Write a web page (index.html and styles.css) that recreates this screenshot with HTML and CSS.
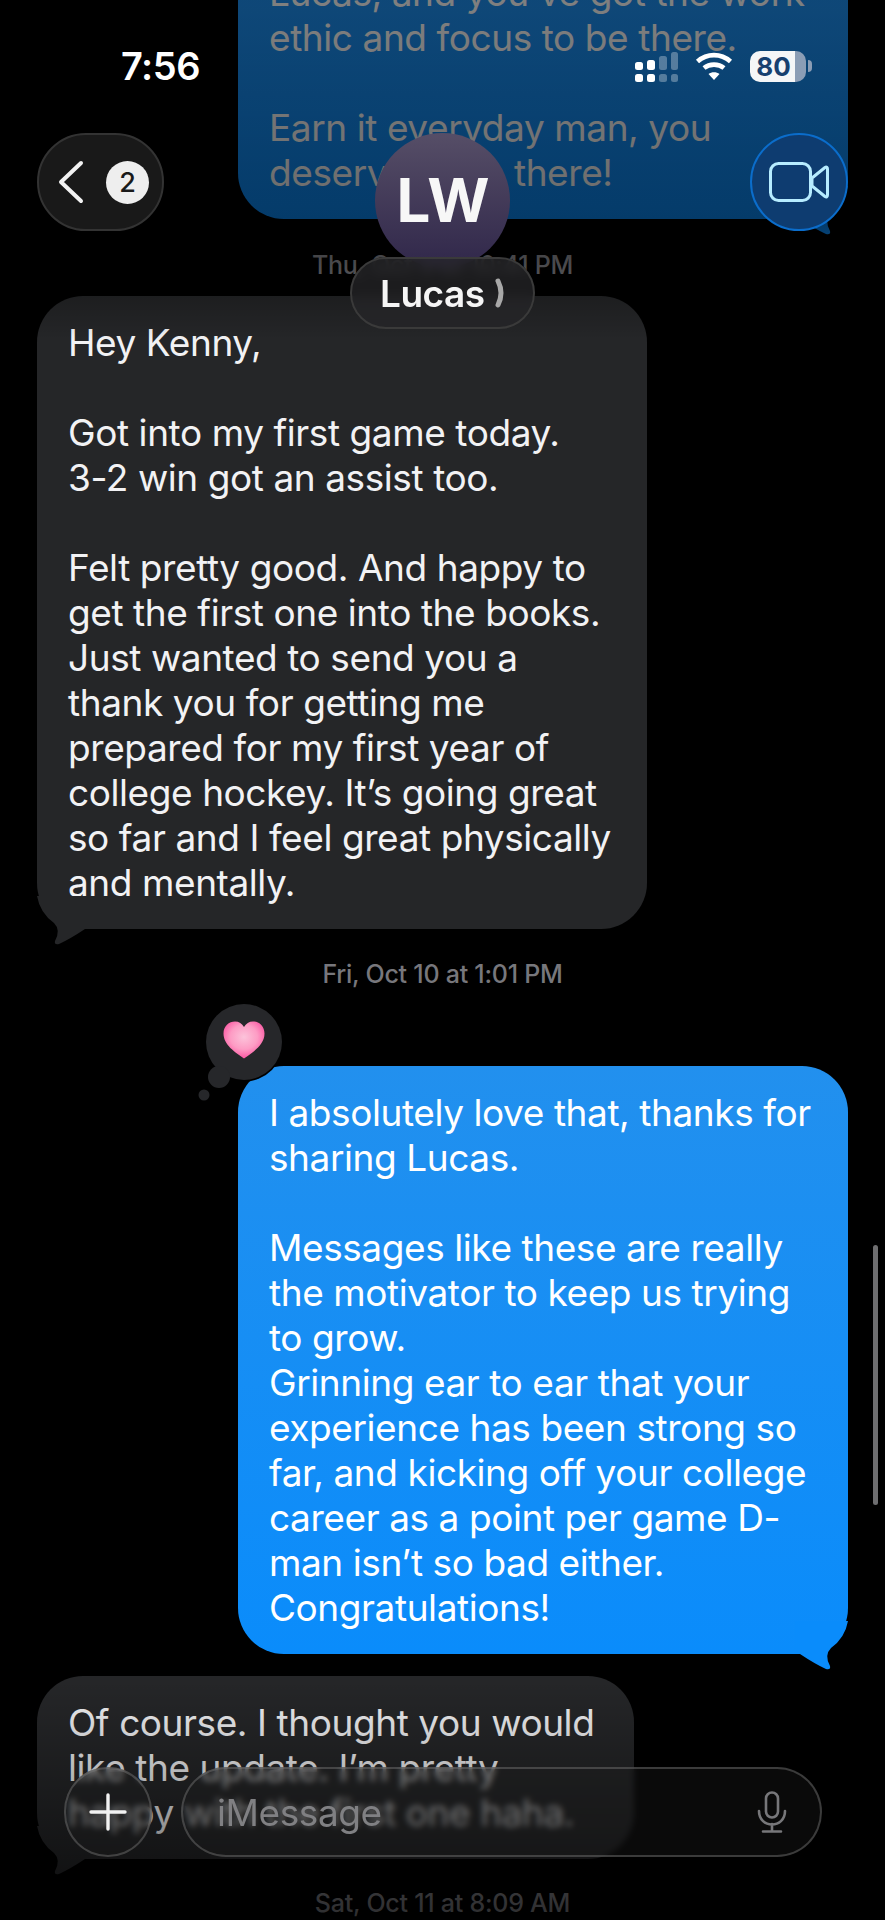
FILE: index.html
```html
<!DOCTYPE html>
<html lang="en">
<head>
    <meta charset="UTF-8">
    <meta name="viewport" content="width=device-width, initial-scale=1.0">
    <title>Lucas</title>
    <link rel="stylesheet" href="styles.css">
</head>
<body>
<div class="phone">
    <div class="thread">
        <div class="bubble sent first">
            Lucas, and you’ve got the work<br>ethic and focus to be there.<br><br>Earn it everyday man, you<br>deserve to be there!
            <svg class="tail" viewBox="0 0 53 50"><path d="M0,33 L5,33 Q20,43 31,48 Q36,49 35,45 Q29,34 36,27 Q50,17 53,0 L0,0 Z"/></svg>
        </div>
        <div class="stamp stamp-top">Thu, Oct 9 at 10:41 PM</div>
        <div class="bubble got wide">
            Hey Kenny,<br><br>Got into my first game today.<br>3-2 win got an assist too.<br><br>Felt pretty good. And happy to<br>get the first one into the books.<br>Just wanted to send you a<br>thank you for getting me<br>prepared for my first year of<br>college hockey. It’s going great<br>so far and I feel great physically<br>and mentally.
            <svg class="tail" viewBox="0 0 53 50"><path d="M0,33 L5,33 Q20,43 31,48 Q36,49 35,45 Q29,34 36,27 Q50,17 53,0 L0,0 Z"/></svg>
        </div>
        <div class="stamp stamp-mid">Fri, Oct 10 at 1:01 PM</div>
        <div class="bubble sent">
            I absolutely love that, thanks for<br>sharing Lucas.<br><br>Messages like these are really<br>the motivator to keep us trying<br>to grow.<br>Grinning ear to ear that your<br>experience has been strong so<br>far, and kicking off your college<br>career as a point per game D-<br>man isn’t so bad either.<br>Congratulations!
            <svg class="tail" viewBox="0 0 53 50"><path d="M0,33 L5,33 Q20,43 31,48 Q36,49 35,45 Q29,34 36,27 Q50,17 53,0 L0,0 Z"/></svg>
            <svg class="tapback" viewBox="0 0 90 90">
                <defs>
                    <radialGradient id="heart" cx="0.5" cy="0.42" r="0.6">
                        <stop offset="0" stop-color="#fcc3da"/>
                        <stop offset="0.55" stop-color="#fd9cc4"/>
                        <stop offset="1" stop-color="#fb4f9f"/>
                    </radialGradient>
                </defs>
                <circle cx="52" cy="38" r="39.500" fill="#000"/>
                <circle cx="27" cy="73" r="12" fill="#000"/>
                <circle cx="52" cy="38" r="38" fill="#26272a"/>
                <circle cx="27" cy="73" r="11" fill="#26272a"/>
                <circle cx="12" cy="91" r="5.500" fill="#26272a"/>
                <path d="M52,54.500 C43,48 31.500,41 31.500,29.500 C31.500,22 37,17.500 43,17.500 C47,17.500 50,19.500 52,23 C54,19.500 57,17.500 61,17.500 C67,17.500 72.500,22 72.500,29.500 C72.500,41 61,48 52,54.500 Z" fill="url(#heart)"/>
            </svg>
        </div>
        <div class="bubble got short">
            Of course. I thought you would<br>like the update. I’m pretty<br>happy with the first one haha.
            <svg class="tail" viewBox="0 0 53 50"><path d="M0,33 L5,33 Q20,43 31,48 Q36,49 35,45 Q29,34 36,27 Q50,17 53,0 L0,0 Z"/></svg>
        </div>
        <div class="stamp stamp-low">Sat, Oct 11 at 8:09 AM</div>
    </div>

    <div class="scrim-top"></div>
    <div class="scrim-bottom"></div>

    <div class="status">
        <span class="clock">7:56</span>
        <div class="status-icons">
            <svg class="signal" width="44" height="32" viewBox="0 0 44 32" fill="#fff">
                <rect x="0" y="11" width="8" height="8" rx="2.500"/>
                <rect x="0" y="23" width="8" height="8" rx="2.500"/>
                <rect x="12" y="9" width="8" height="10" rx="2.500"/>
                <rect x="12" y="23" width="8" height="8" rx="2.500"/>
                <g opacity="0.3">
                    <rect x="24" y="5" width="8" height="14" rx="2.500"/>
                    <rect x="24" y="23" width="8" height="8" rx="2.500"/>
                    <rect x="36" y="1" width="7" height="18" rx="2.500"/>
                    <rect x="36" y="23" width="7" height="8" rx="2.500"/>
                </g>
            </svg>
            <svg class="wifi" width="38" height="30" viewBox="0 0 38 30" fill="none" stroke="#fff" stroke-width="4.600">
                <path d="M2.500,10.500 C12,2 26,2 35.500,10.500"/>
                <path d="M9,17 C14.500,12.500 23.500,12.500 29,17"/>
                <path d="M19,29 L13.500,23 C16.500,20.500 21.500,20.500 24.500,23 Z" fill="#fff" stroke="none"/>
            </svg>
            <div class="battery"><div class="battery-body"><span>80</span></div><div class="battery-nub"></div></div>
        </div>
    </div>

    <div class="back">
        <svg width="26" height="44" viewBox="0 0 26 44" fill="none" stroke="#f2f2f2" stroke-width="4" stroke-linecap="round" stroke-linejoin="round"><path d="M23,3 L3,22 L23,41"/></svg>
        <span class="badge">2</span>
    </div>
    <div class="avatar">LW</div>
    <div class="name-pill">
        <span>Lucas</span>
        <svg width="12" height="30" viewBox="0 0 12 30" fill="none" stroke="#a8a8a8" stroke-width="5" stroke-linecap="round"><path d="M3,3 Q9,15 3,27"/></svg>
    </div>
    <div class="video">
        <svg width="60" height="40" viewBox="0 0 60 40" fill="none" stroke="#b6ecff" stroke-width="3" stroke-linejoin="round">
            <rect x="1.500" y="1.500" width="40" height="37" rx="8"/>
            <path d="M43,16 L56,5.500 C57.500,4.500 58.500,5.500 58.500,7 L58.500,33 C58.500,34.500 57.500,35.500 56,34.500 L43,24 Z"/>
        </svg>
    </div>

    <div class="scroll-thumb"></div>

    <div class="composer">
        <div class="plus">
            <svg width="38" height="38" viewBox="0 0 38 38" stroke="#f2f2f2" stroke-width="3.400" stroke-linecap="round"><path d="M19,2 V36 M2,19 H36"/></svg>
        </div>
        <div class="field">
            <span>iMessage</span>
            <svg width="30" height="42" viewBox="0 0 30 42" fill="none" stroke="#77777a" stroke-width="2.600" stroke-linecap="round"><rect x="9" y="1.500" width="12" height="25" rx="6"/><path d="M2,20 C2,38 28,38 28,20 M15,33 V40 M6,40.500 H24"/></svg>
        </div>
    </div>
</div>
</body>
</html>
```

FILE: styles.css
```css
html, body{
    margin: 0;
    background: #000;
}
.phone{
    position: relative;
    width: 885px;
    height: 1920px;
    overflow: hidden;
    background: #000;
    font-family: Inter, "Liberation Sans", sans-serif;
}
.thread{
    display: flex;
    flex-direction: column;
    padding: 0 37px;
    margin-top: -54px;
}
.bubble{
    position: relative;
    box-sizing: border-box;
    padding: 24px 31px;
    border-radius: 46px;
    font-size: 37px;
    letter-spacing: -0.42px;
    line-height: 45px;
    white-space: nowrap;
}
.sent{
    align-self: flex-end;
    width: 610px;
    color: #fff;
    background: linear-gradient(to bottom, #2290ee, #0a8cfb);
}
.got{
    align-self: flex-start;
    color: #f2f2f4;
    background: #252628;
}
.wide{
    width: 610px;
}
.short{
    width: 597px;
    margin-top: 22px;
}
.tail{
    position: absolute;
    bottom: -17px;
    width: 53px;
    height: 50px;
}
.sent .tail{
    right: 0;
    fill: #0a8cfb;
}
.got .tail{
    left: 0;
    fill: #252628;
    transform: scaleX(-1);
}
.tapback{
    position: absolute;
    left: -46px;
    top: -62px;
    width: 90px;
    height: 90px;
    overflow: visible;
}
.stamp{
    align-self: center;
    height: 30px;
    line-height: 30px;
    font-size: 25px;
    font-weight: 500;
    color: #77777c;
    letter-spacing: -0.25px;
    white-space: nowrap;
}
.stamp-top{
    margin-top: 31px;
    margin-bottom: 16px;
}
.stamp-mid{
    margin-top: 30px;
    margin-bottom: 77px;
}
.stamp-low{
    margin-top: 29px;
}

.scrim-top{
    position: absolute;
    left: 0;
    right: 0;
    top: 0;
    height: 340px;
    background: linear-gradient(to bottom, rgba(0,0,0,.5) 0, rgba(0,0,0,.58) 225px, rgba(0,0,0,.2) 300px, rgba(0,0,0,0) 340px);
}
.scrim-bottom{
    position: absolute;
    left: 0;
    right: 0;
    bottom: 0;
    height: 240px;
    background: linear-gradient(to bottom, rgba(0,0,0,0) 0, rgba(0,0,0,.5) 190px, rgba(0,0,0,.62) 240px);
}

.status{
    position: absolute;
    left: 121px;
    right: 73px;
    top: 46px;
    display: flex;
    justify-content: space-between;
    align-items: center;
    height: 40px;
}
.clock{
    font-size: 38px;
    font-weight: 600;
    color: #fff;
    letter-spacing: -0.5px;
}
.status-icons{
    display: flex;
    align-items: center;
    gap: 16px;
}
.signal{
    margin-top: 2px;
}
.battery{
    display: flex;
    align-items: center;
    gap: 2px;
    margin-left: 1px;
}
.battery-body{
    display: flex;
    align-items: center;
    justify-content: center;
    box-sizing: border-box;
    width: 56px;
    height: 31px;
    padding-right: 9px;
    border-radius: 10px;
    background: linear-gradient(to right, #f5f6f7 0, #f5f6f7 45px, #8b9db5 45px);
    color: #17406f;
    font-size: 26px;
    font-weight: 700;
}
.battery-nub{
    width: 4px;
    height: 12px;
    border-radius: 0 4px 4px 0;
    background: #8b9db5;
}

.back{
    position: absolute;
    left: 37px;
    top: 133px;
    box-sizing: border-box;
    display: flex;
    align-items: center;
    gap: 22px;
    width: 127px;
    height: 98px;
    padding-left: 19px;
    border: 2px solid #333;
    border-radius: 49px;
    background: #191919;
}
.badge{
    width: 43px;
    height: 43px;
    border-radius: 50%;
    background: #eee;
    color: #1a1a1a;
    font-size: 27px;
    font-weight: 500;
    line-height: 43px;
    text-align: center;
}
.avatar{
    position: absolute;
    left: 375px;
    top: 133px;
    width: 135px;
    height: 135px;
    border-radius: 50%;
    background: linear-gradient(to bottom, #564e67, #30274a);
    color: #f7f7f7;
    font-size: 60px;
    font-weight: 700;
    letter-spacing: -1px;
    line-height: 135px;
    text-align: center;
}
.name-pill{
    position: absolute;
    left: 350px;
    top: 257px;
    box-sizing: border-box;
    display: flex;
    align-items: center;
    gap: 10px;
    width: 185px;
    height: 72px;
    padding-left: 28px;
    border: 2px solid #3a3a3a;
    border-radius: 36px;
    background: rgba(38,38,40,.75);
    backdrop-filter: blur(6px);
    color: #f5f5f5;
    font-size: 37px;
    font-weight: 600;
    letter-spacing: -0.5px;
}
.video{
    position: absolute;
    left: 750px;
    top: 133px;
    box-sizing: border-box;
    display: flex;
    align-items: center;
    justify-content: center;
    width: 98px;
    height: 98px;
    border: 2px solid #0b6dcb;
    border-radius: 50%;
    background: #0e3c70;
}
.scroll-thumb{
    position: absolute;
    left: 873px;
    top: 1245px;
    width: 5px;
    height: 260px;
    border-radius: 3px;
    background: #6e6e70;
}

.composer{
    position: absolute;
    left: 64px;
    top: 1767px;
    display: flex;
    gap: 29px;
    width: 758px;
    height: 90px;
}
.plus, .field{
    box-sizing: border-box;
    display: flex;
    align-items: center;
    height: 90px;
    border: 2px solid rgba(120,120,120,.45);
    border-radius: 45px;
    background: rgba(30,30,30,.35);
    backdrop-filter: blur(3px);
}
.plus{
    justify-content: center;
    flex: 0 0 88px;
}
.field{
    flex: 1;
    justify-content: space-between;
    padding: 0 33px 0 34px;
    color: #808083;
    font-size: 37px;
    letter-spacing: -0.42px;
}
```
